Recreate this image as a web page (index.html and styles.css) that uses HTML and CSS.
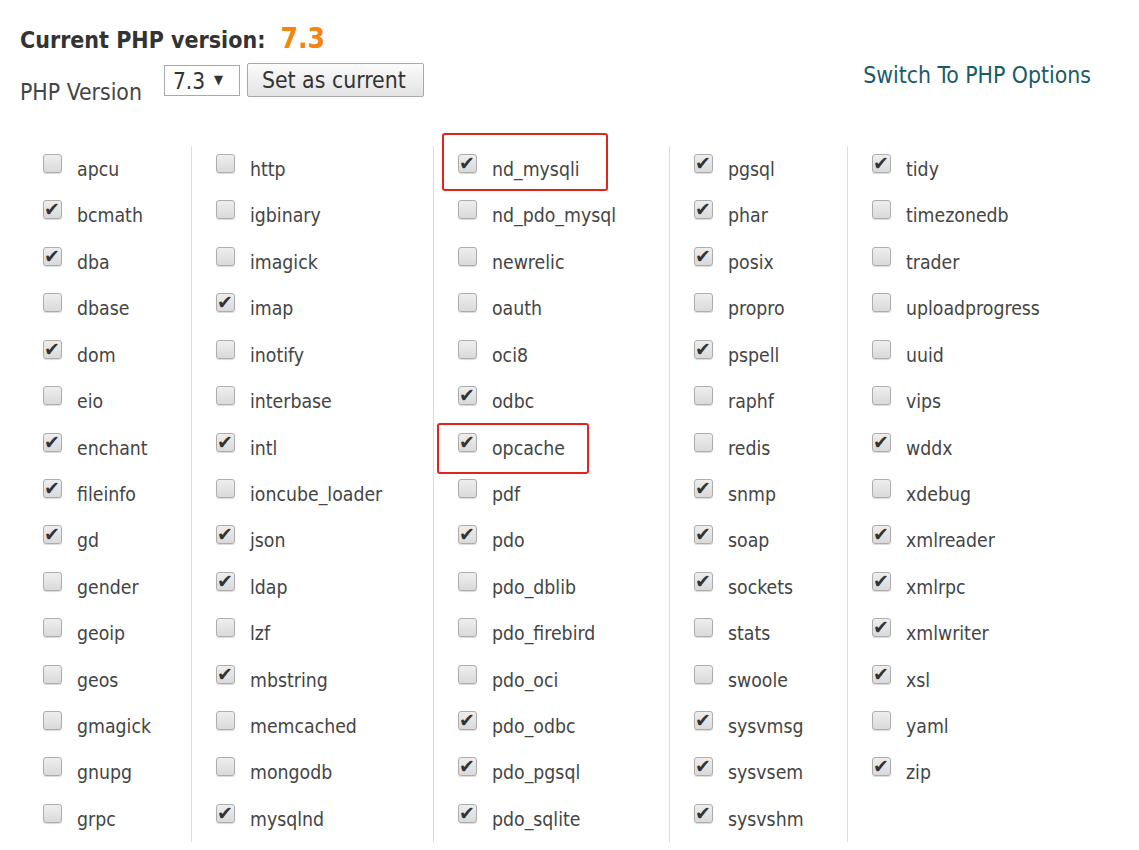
FILE: index.html
```html
<!DOCTYPE html>
<html lang="en">
<head>
    <meta charset="UTF-8">
    <title>PHP Selector</title>
    <link rel="stylesheet" href="styles.css">
</head>
<body>
    <div class="page">
        <div class="current">
            <span class="current-label">Current PHP version:</span>
            <span class="current-value">7.3</span>
        </div>
        <div class="switcher">
            <span class="ver-label">PHP Version</span>
            <div class="select"><span>7.3</span><span class="arrow">&#9660;</span></div>
            <button class="btn">Set as current</button>
            <a href="javascript:;" class="options-link">Switch To PHP Options</a>
        </div>

        <div class="modules">
            <ul class="col col1">
                <li class="mod"><span class="box"></span><span class="name">apcu</span></li>
                <li class="mod"><span class="box on"></span><span class="name">bcmath</span></li>
                <li class="mod"><span class="box on"></span><span class="name">dba</span></li>
                <li class="mod"><span class="box"></span><span class="name">dbase</span></li>
                <li class="mod"><span class="box on"></span><span class="name">dom</span></li>
                <li class="mod"><span class="box"></span><span class="name">eio</span></li>
                <li class="mod"><span class="box on"></span><span class="name">enchant</span></li>
                <li class="mod"><span class="box on"></span><span class="name">fileinfo</span></li>
                <li class="mod"><span class="box on"></span><span class="name">gd</span></li>
                <li class="mod"><span class="box"></span><span class="name">gender</span></li>
                <li class="mod"><span class="box"></span><span class="name">geoip</span></li>
                <li class="mod"><span class="box"></span><span class="name">geos</span></li>
                <li class="mod"><span class="box"></span><span class="name">gmagick</span></li>
                <li class="mod"><span class="box"></span><span class="name">gnupg</span></li>
                <li class="mod"><span class="box"></span><span class="name">grpc</span></li>
            </ul>
            <ul class="col col2">
                <li class="mod"><span class="box"></span><span class="name">http</span></li>
                <li class="mod"><span class="box"></span><span class="name">igbinary</span></li>
                <li class="mod"><span class="box"></span><span class="name">imagick</span></li>
                <li class="mod"><span class="box on"></span><span class="name">imap</span></li>
                <li class="mod"><span class="box"></span><span class="name">inotify</span></li>
                <li class="mod"><span class="box"></span><span class="name">interbase</span></li>
                <li class="mod"><span class="box on"></span><span class="name">intl</span></li>
                <li class="mod"><span class="box"></span><span class="name">ioncube_loader</span></li>
                <li class="mod"><span class="box on"></span><span class="name">json</span></li>
                <li class="mod"><span class="box on"></span><span class="name">ldap</span></li>
                <li class="mod"><span class="box"></span><span class="name">lzf</span></li>
                <li class="mod"><span class="box on"></span><span class="name">mbstring</span></li>
                <li class="mod"><span class="box"></span><span class="name">memcached</span></li>
                <li class="mod"><span class="box"></span><span class="name">mongodb</span></li>
                <li class="mod"><span class="box on"></span><span class="name">mysqlnd</span></li>
            </ul>
            <ul class="col col3">
                <li class="mod"><span class="box on"></span><span class="name">nd_mysqli</span><span class="mark mark-a"></span></li>
                <li class="mod"><span class="box"></span><span class="name">nd_pdo_mysql</span></li>
                <li class="mod"><span class="box"></span><span class="name">newrelic</span></li>
                <li class="mod"><span class="box"></span><span class="name">oauth</span></li>
                <li class="mod"><span class="box"></span><span class="name">oci8</span></li>
                <li class="mod"><span class="box on"></span><span class="name">odbc</span></li>
                <li class="mod"><span class="box on"></span><span class="name">opcache</span><span class="mark mark-b"></span></li>
                <li class="mod"><span class="box"></span><span class="name">pdf</span></li>
                <li class="mod"><span class="box on"></span><span class="name">pdo</span></li>
                <li class="mod"><span class="box"></span><span class="name">pdo_dblib</span></li>
                <li class="mod"><span class="box"></span><span class="name">pdo_firebird</span></li>
                <li class="mod"><span class="box"></span><span class="name">pdo_oci</span></li>
                <li class="mod"><span class="box on"></span><span class="name">pdo_odbc</span></li>
                <li class="mod"><span class="box on"></span><span class="name">pdo_pgsql</span></li>
                <li class="mod"><span class="box on"></span><span class="name">pdo_sqlite</span></li>
            </ul>
            <ul class="col col4">
                <li class="mod"><span class="box on"></span><span class="name">pgsql</span></li>
                <li class="mod"><span class="box on"></span><span class="name">phar</span></li>
                <li class="mod"><span class="box on"></span><span class="name">posix</span></li>
                <li class="mod"><span class="box"></span><span class="name">propro</span></li>
                <li class="mod"><span class="box on"></span><span class="name">pspell</span></li>
                <li class="mod"><span class="box"></span><span class="name">raphf</span></li>
                <li class="mod"><span class="box"></span><span class="name">redis</span></li>
                <li class="mod"><span class="box on"></span><span class="name">snmp</span></li>
                <li class="mod"><span class="box on"></span><span class="name">soap</span></li>
                <li class="mod"><span class="box on"></span><span class="name">sockets</span></li>
                <li class="mod"><span class="box"></span><span class="name">stats</span></li>
                <li class="mod"><span class="box"></span><span class="name">swoole</span></li>
                <li class="mod"><span class="box on"></span><span class="name">sysvmsg</span></li>
                <li class="mod"><span class="box on"></span><span class="name">sysvsem</span></li>
                <li class="mod"><span class="box on"></span><span class="name">sysvshm</span></li>
            </ul>
            <ul class="col col5">
                <li class="mod"><span class="box on"></span><span class="name">tidy</span></li>
                <li class="mod"><span class="box"></span><span class="name">timezonedb</span></li>
                <li class="mod"><span class="box"></span><span class="name">trader</span></li>
                <li class="mod"><span class="box"></span><span class="name">uploadprogress</span></li>
                <li class="mod"><span class="box"></span><span class="name">uuid</span></li>
                <li class="mod"><span class="box"></span><span class="name">vips</span></li>
                <li class="mod"><span class="box on"></span><span class="name">wddx</span></li>
                <li class="mod"><span class="box"></span><span class="name">xdebug</span></li>
                <li class="mod"><span class="box on"></span><span class="name">xmlreader</span></li>
                <li class="mod"><span class="box on"></span><span class="name">xmlrpc</span></li>
                <li class="mod"><span class="box on"></span><span class="name">xmlwriter</span></li>
                <li class="mod"><span class="box on"></span><span class="name">xsl</span></li>
                <li class="mod"><span class="box"></span><span class="name">yaml</span></li>
                <li class="mod"><span class="box on"></span><span class="name">zip</span></li>
            </ul>
        </div>
    </div>
</body>
</html>
```

FILE: styles.css
```css
* {
    margin: 0;
    padding: 0;
    list-style: none;
    box-sizing: border-box;
}
body {
    background: #fff;
    font-family: "DejaVu Sans Condensed", "DejaVu Sans", sans-serif;
    color: #444;
}
.page {
    padding: 24px 48px 0 20px;
}

/* header */
.current {
    display: flex;
    align-items: baseline;
    line-height: 30px;
}
.current-label {
    font-size: 23px;
    font-weight: bold;
    color: #333;
}
.current-value {
    margin-left: 15px;
    font-size: 28px;
    font-weight: bold;
    color: #f5850f;
}
.switcher {
    display: flex;
    align-items: flex-start;
    height: 40px;
    margin-top: 8px;
}
.ver-label {
    font-size: 22.8px;
    line-height: 1;
    margin-top: 18px;
    margin-right: 22px;
}
.select {
    display: flex;
    align-items: center;
    width: 76px;
    height: 31px;
    margin-top: 2px;
    padding-left: 8px;
    border: 1px solid #a9a9a9;
    background: #fff;
    font-size: 22.5px;
    color: #333;
}
.select .arrow {
    font-size: 13px;
    margin-left: 9px;
    margin-top: -2px;
}
.btn {
    width: 177px;
    height: 34px;
    margin-left: 7px;
    padding-left: 14px;
    text-align: left;
    border: 1px solid #a9a9a9;
    border-radius: 2px;
    background: linear-gradient(#fbfbfb, #e3e3e3);
    font-family: inherit;
    font-size: 22.8px;
    color: #333;
}
.options-link {
    margin-left: auto;
    margin-top: 1px;
    font-size: 22.8px;
    line-height: 1;
    color: #195b68;
    text-decoration: none;
}

/* modules */
.modules {
    display: flex;
    margin-top: 43px;
}
.col {
    flex: none;
    padding-left: 24px;
    border-left: 1px solid #dcdcdc;
}
.col1 {
    width: 171px;
    padding-left: 23px;
    border-left: none;
}
.col2 {
    width: 242px;
}
.col3 {
    width: 236px;
}
.col4 {
    width: 178px;
}
.col5 {
    flex: 1;
}
.mod {
    position: relative;
    display: flex;
    align-items: flex-start;
    height: 46.43px;
    padding-top: 8px;
}
.box {
    position: relative;
    flex: none;
    width: 19px;
    height: 19px;
    border: 1px solid #adadad;
    border-radius: 3px;
    background: linear-gradient(#eeeeee, #dadada);
    box-shadow: 0 1px 1px rgba(0,0,0,0.15);
}
.box.on::after {
    content: "\2714";
    position: absolute;
    left: 0;
    top: -2px;
    font-family: "DejaVu Sans", sans-serif;
    font-size: 19px;
    line-height: 20px;
    color: #333;
}
.name {
    margin-left: 15px;
    margin-top: 6px;
    font-size: 19.3px;
    line-height: 1;
}
.mark {
    position: absolute;
    border: 2px solid #e3241c;
    border-radius: 3px;
}
.mark-a {
    left: -16px;
    top: -13px;
    width: 166px;
    height: 58px;
}
.mark-b {
    left: -21px;
    top: -2px;
    width: 152px;
    height: 51px;
}
```
